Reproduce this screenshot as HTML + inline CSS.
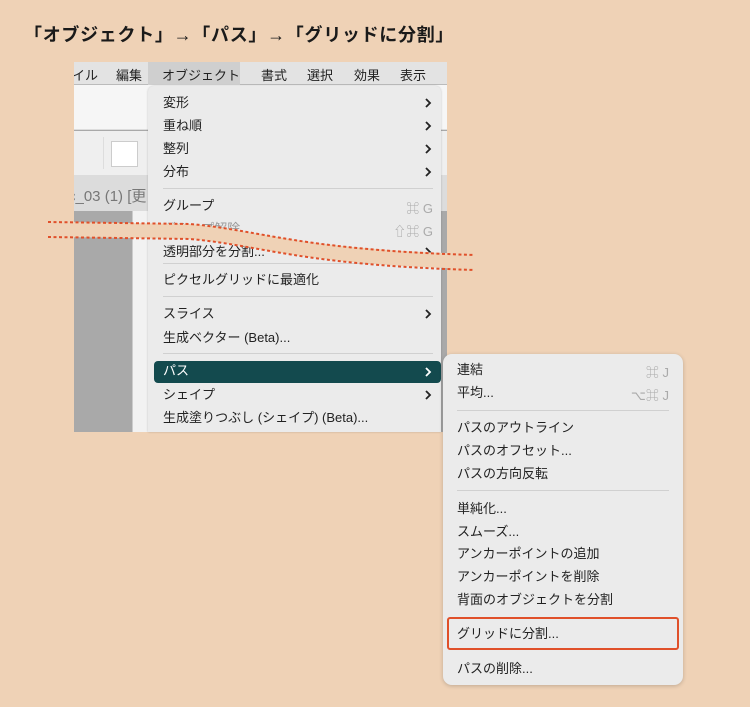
<!DOCTYPE html>
<html><head><meta charset="utf-8"><style>
*{margin:0;padding:0;box-sizing:border-box}
body{width:750px;height:707px;background:#efd2b6;position:relative;overflow:hidden;font-family:"Liberation Sans","Noto Sans CJK JP",sans-serif;color:#222}
.abs{position:absolute}
.title{left:24px;top:21px;font-size:18px;font-weight:bold;color:#1a1a1a;letter-spacing:0.7px}
.shot{left:74px;top:62px;width:373px;height:370px;overflow:hidden;background:#a9a9a9}
.mb{left:0;top:0;width:373px;height:23px;background:#e3e3e3;font-size:13px;border-bottom:1px solid #bbb}
.mb span{position:absolute;top:3px}
.menu{left:148px;top:86px;width:293px;height:346px;background:#ebebeb;border-radius:6px 6px 0 0;box-shadow:0 0 2px rgba(0,0,0,.2);overflow:hidden}
.it{position:absolute;left:15px;font-size:13px;line-height:16px;white-space:nowrap}
.arr{position:absolute;right:9px;width:8px;height:12px}
.sep{position:absolute;left:15px;right:8px;height:1px;background:#d0d0d0}
.sc{position:absolute;right:8px;font-size:13px;color:#aaa}
.sub{left:443px;top:354px;width:240px;height:331px;background:#ebebeb;border-radius:9px;box-shadow:0 1px 4px rgba(0,0,0,.2)}
</style></head><body>
<svg width="0" height="0" style="position:absolute"><defs><symbol id="ch" viewBox="0 0 8 12"><path d="M2,2 L6,6 L2,10" fill="none" stroke="currentColor" stroke-width="1.8"/></symbol></defs></svg>
<div class="abs title">「オブジェクト」→「パス」→「グリッドに分割」</div>
<div class="abs shot">
  <div class="abs" style="left:0;top:23px;width:373px;height:45px;background:#f6f6f6;border-bottom:1px solid #ddd"></div>
  <div class="abs" style="left:0;top:69px;width:373px;height:44px;background:#efefef"></div>
  <div class="abs" style="left:29px;top:75px;width:1px;height:32px;background:#ddd"></div>
  <div class="abs" style="left:37px;top:79px;width:27px;height:26px;background:#fff;border:1px solid #ccc"></div>
  <div class="abs" style="left:0;top:113px;width:373px;height:36px;background:#dcdcdc;font-size:15px;color:#777"><span style="position:absolute;left:-6px;top:10px">c_03 (1) [更</span></div>
  <div class="abs" style="left:58px;top:149px;width:20px;height:230px;background:#f2f2f2;border-left:1px solid #ccc"></div>
  <div class="abs mb"><span style="left:-2px">イル</span><span style="left:42px">編集</span>
  <span style="left:74px;top:0;width:92px;height:23px;background:#cfcfcf"></span><span style="left:88px">オブジェクト</span>
  <span style="left:187px">書式</span><span style="left:233px">選択</span><span style="left:280px">効果</span><span style="left:326px">表示</span></div>
</div>
<div class="abs menu">
  <div class="it" style="top:9px">変形</div><svg class="arr" style="top:11px"><use href="#ch"/></svg>
  <div class="it" style="top:32px">重ね順</div><svg class="arr" style="top:34px"><use href="#ch"/></svg>
  <div class="it" style="top:55px">整列</div><svg class="arr" style="top:57px"><use href="#ch"/></svg>
  <div class="it" style="top:78px">分布</div><svg class="arr" style="top:80px"><use href="#ch"/></svg>
  <div class="sep" style="top:102px"></div>
  <div class="it" style="top:112px">グループ</div><div class="sc" style="top:112px">⌘ G</div>
  <div class="it" style="top:135px;color:#999">グループ解除</div><div class="sc" style="top:135px">⇧⌘ G</div>
  <div class="it" style="top:158px">透明部分を分割...</div><svg class="arr" style="top:160px"><use href="#ch"/></svg>
  <div class="sep" style="top:177px"></div>
  <div class="it" style="top:186px">ピクセルグリッドに最適化</div>
  <div class="sep" style="top:210px"></div>
  <div class="it" style="top:220px">スライス</div><svg class="arr" style="top:222px"><use href="#ch"/></svg>
  <div class="it" style="top:244px">生成ベクター (Beta)...</div>
  <div class="sep" style="top:267px"></div>
  <div class="abs" style="left:6px;top:275px;width:287px;height:22px;background:#134a4e;border-radius:4px"></div>
  <div class="it" style="top:277px;color:#fff">パス</div><svg class="arr" style="top:280px;color:#fff"><use href="#ch"/></svg>
  <div class="it" style="top:301px">シェイプ</div><svg class="arr" style="top:303px"><use href="#ch"/></svg>
  <div class="it" style="top:324px">生成塗りつぶし (シェイプ) (Beta)...</div>
</div>
<svg class="abs" style="left:0;top:0" width="750" height="707">
  <path d="M0,221 L190,224 C260,230 300,250 480,254 L480,269 C300,265 260,245 190,239 L0,236 Z" fill="#efd2b6"/>
  <path d="M48,222 L190,224 C260,230 300,250 475,255" fill="none" stroke="#e0502a" stroke-width="2" stroke-dasharray="3,2.5"/>
  <path d="M48,237 L190,239 C260,245 300,265 475,270" fill="none" stroke="#e0502a" stroke-width="2" stroke-dasharray="3,2.5"/>
</svg>
<div class="abs sub">
  <div class="it" style="top:8px;left:14px">連結</div><div class="sc" style="top:8px;right:14px">⌘ J</div>
  <div class="it" style="top:31px;left:14px">平均...</div><div class="sc" style="top:31px;right:14px">⌥⌘ J</div>
  <div class="sep" style="top:56px;left:14px;right:14px"></div>
  <div class="it" style="top:66px;left:14px">パスのアウトライン</div>
  <div class="it" style="top:89px;left:14px">パスのオフセット...</div>
  <div class="it" style="top:112px;left:14px">パスの方向反転</div>
  <div class="sep" style="top:136px;left:14px;right:14px"></div>
  <div class="it" style="top:147px;left:14px">単純化...</div>
  <div class="it" style="top:170px;left:14px">スムーズ...</div>
  <div class="it" style="top:192px;left:14px">アンカーポイントの追加</div>
  <div class="it" style="top:215px;left:14px">アンカーポイントを削除</div>
  <div class="it" style="top:238px;left:14px">背面のオブジェクトを分割</div>
  <div class="abs" style="left:4px;top:263px;width:232px;height:33px;border:2.5px solid #e0502a;border-radius:3px"></div>
  <div class="it" style="top:272px;left:14px">グリッドに分割...</div>
  <div class="it" style="top:307px;left:14px">パスの削除...</div>
</div>
</body></html>
